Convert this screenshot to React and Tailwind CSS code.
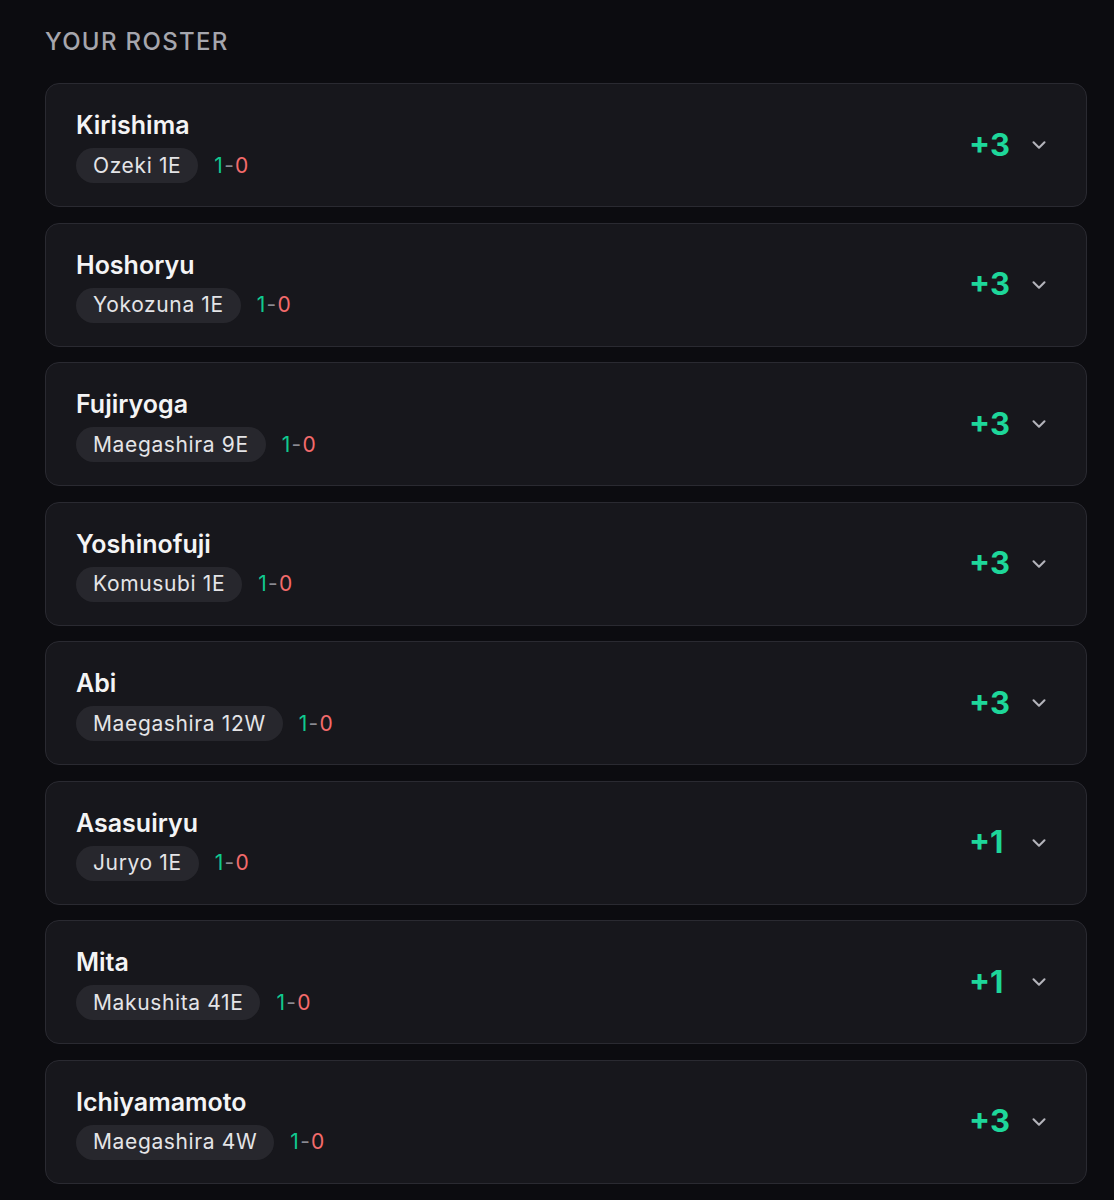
import React from 'react';
import { ChevronDown } from 'lucide-react';

const roster = [
  { name: 'Kirishima', rank: 'Ozeki 1E', wins: 1, losses: 0, points: 3 },
  { name: 'Hoshoryu', rank: 'Yokozuna 1E', wins: 1, losses: 0, points: 3 },
  { name: 'Fujiryoga', rank: 'Maegashira 9E', wins: 1, losses: 0, points: 3 },
  { name: 'Yoshinofuji', rank: 'Komusubi 1E', wins: 1, losses: 0, points: 3 },
  { name: 'Abi', rank: 'Maegashira 12W', wins: 1, losses: 0, points: 3 },
  { name: 'Asasuiryu', rank: 'Juryo 1E', wins: 1, losses: 0, points: 1 },
  { name: 'Mita', rank: 'Makushita 41E', wins: 1, losses: 0, points: 1 },
  { name: 'Ichiyamamoto', rank: 'Maegashira 4W', wins: 1, losses: 0, points: 3 },
];

const RikishiCard = ({ rikishi }) => (
  <div className="flex h-[124px] items-center justify-between rounded-[14px] border border-[#2a2a31] bg-[#17171c] pl-[30px] pr-[36px]">
    <div className="flex flex-col pt-[3px]">
      <div className="text-[25px] font-semibold leading-[30px] text-[#f4f4f5]">{rikishi.name}</div>
      <div className="mt-[8px] flex items-center gap-[16px]">
        <span className="flex h-[35px] items-center rounded-full bg-[#27272d] px-[17px] text-[21px] tracking-[0.03em] text-[#e4e4e7]">
          {rikishi.rank}
        </span>
        <span className="text-[21px] tracking-[0.06em]">
          <span className="text-[#10c98f]">{rikishi.wins}</span>
          <span className="text-[#8b8b93]">-</span>
          <span className="text-[#f46b6b]">{rikishi.losses}</span>
        </span>
      </div>
    </div>
    <div className="flex items-center gap-[21px]">
      <span className="w-[38px] text-[31px] font-bold text-[#1ed79a]">+{rikishi.points}</span>
      <ChevronDown size={22} strokeWidth={2.25} className="text-[#b4b4bb]" />
    </div>
  </div>
);

export default function App() {
  return (
    <div
      className="min-h-[1200px] bg-[#0c0c10] pl-[45px] pr-[27px] pt-[28px]"
      style={{ fontFamily: 'Inter, "Noto Sans", sans-serif' }}
    >
      <h2 className="text-[24px] font-medium uppercase leading-[28px] tracking-[0.055em] text-[#a6a6ad]">
        Your Roster
      </h2>
      <div className="mt-[27px] flex flex-col gap-[15.5px]">
        {roster.map((r) => (
          <RikishiCard key={r.name} rikishi={r} />
        ))}
      </div>
    </div>
  );
}
